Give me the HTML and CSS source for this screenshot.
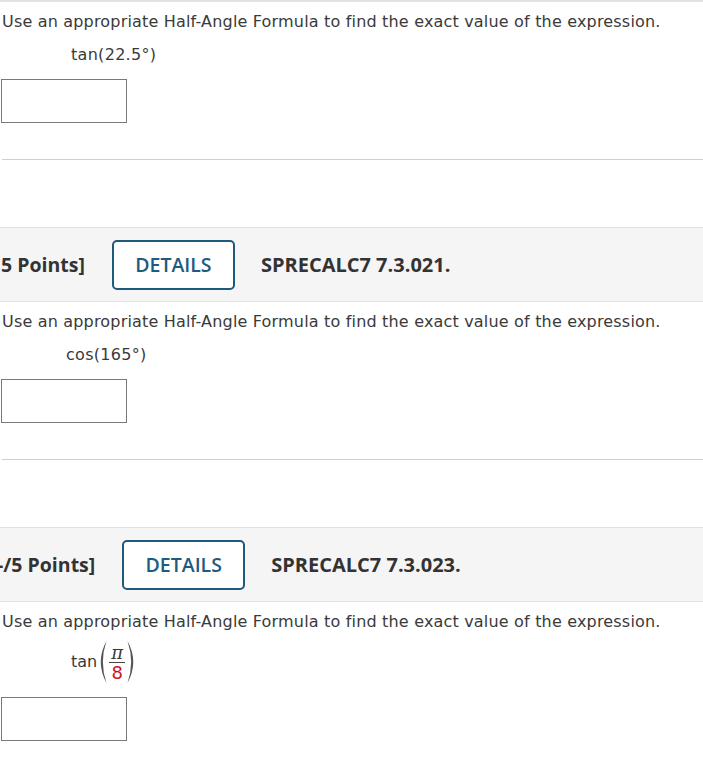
FILE: index.html
```html
<!DOCTYPE html>
<html>
<head>
<meta charset="utf-8">
<link rel="stylesheet" href="styles.css">
</head>
<body>
<div class="page">
  <section class="question first">
    <p class="prompt">Use an appropriate Half-Angle Formula to find the exact value of the expression.</p>
    <div class="expr expr-tan">tan(22.5°)</div>
    <div class="answer"><input class="box" type="text"></div>
  </section>
  <div class="spacer"></div>

  <header class="qhead">
    <span class="points p1">5 Points]</span>
    <button class="details">DETAILS</button>
    <span class="code">SPRECALC7 7.3.021.</span>
  </header>
  <section class="question">
    <p class="prompt">Use an appropriate Half-Angle Formula to find the exact value of the expression.</p>
    <div class="expr expr-cos">cos(165°)</div>
    <div class="answer"><input class="box" type="text"></div>
  </section>
  <div class="spacer"></div>

  <header class="qhead">
    <span class="points p2">-/5 Points]</span>
    <button class="details">DETAILS</button>
    <span class="code">SPRECALC7 7.3.023.</span>
  </header>
  <section class="question last">
    <p class="prompt">Use an appropriate Half-Angle Formula to find the exact value of the expression.</p>
    <div class="expr-frac">
      <span class="fn">tan</span>
      <svg class="paren" width="10" height="44" viewBox="0 0 10 44"><path d="M9.5 1 Q-2 22 9.5 43 Q2.2 22 9.5 1Z" fill="#555"/></svg>
      <span class="frac"><span class="num">π</span><span class="den">8</span></span>
      <svg class="paren" width="10" height="44" viewBox="0 0 10 44"><path d="M0.5 1 Q12 22 0.5 43 Q7.8 22 0.5 1Z" fill="#555"/></svg>
    </div>
    <div class="answer"><input class="box" type="text"></div>
  </section>
</div>
</body>
</html>
```
FILE: styles.css
```css
html, body {
  margin: 0;
  padding: 0;
  background: #fff;
}
.page {
  width: 703px;
  overflow: hidden;
  font-family: "DejaVu Sans", Verdana, sans-serif;
  color: #3a3a3a;
}
.question {
  padding: 0 0 0 2px;
}
.question.first {
  border-top: 2px solid #e2e2e2;
}
.prompt {
  margin: 0;
  padding-top: 10px;
  font-size: 16px;
  line-height: 20px;
  letter-spacing: 0.18px;
  white-space: nowrap;
}
.expr {
  font-size: 16px;
  line-height: 20px;
  margin-top: 13px;
  letter-spacing: 0.3px;
}
.expr-tan { margin-left: 69px; }
.expr-cos { margin-left: 64px; }
.answer {
  padding-top: 14px;
  padding-bottom: 36px;
  border-bottom: 1px solid #cfcfcf;
}
.question.last .answer {
  padding-top: 13px;
  border-bottom: none;
}
.box {
  display: block;
  box-sizing: border-box;
  width: 126px;
  height: 44px;
  margin: 0 0 0 -1px;
  border: 1px solid #7a7a7a;
  padding: 0;
  background: #fff;
}
.spacer {
  height: 67px;
}
.qhead {
  display: flex;
  align-items: center;
  height: 73px;
  background: #f5f5f5;
  border-top: 1px solid #e0e0e0;
  border-bottom: 1px solid #e0e0e0;
  font-family: "Open Sans", sans-serif;
  font-weight: 700;
  font-size: 19.5px;
  color: #333;
  white-space: nowrap;
}
.points { margin-right: 27px; }
.points.p1 { margin-left: 1px; }
.points.p2 { margin-left: -3px; }
.details {
  box-sizing: border-box;
  height: 50px;
  width: 123px;
  border: 2px solid #1e5a7c;
  border-radius: 5px;
  background: #fff;
  color: #1d5b80;
  font-family: "Open Sans", sans-serif;
  font-weight: 600;
  font-size: 19.5px;
  padding: 0;
  margin-right: 26px;
  flex: none;
}
.code {
  font-weight: 700;
  font-size: 20px;
}
.expr-frac {
  display: flex;
  align-items: center;
  margin-left: 69px;
  margin-top: 8px;
  height: 44px;
}
.fn {
  font-size: 16px;
  line-height: 20px;
}
.paren {
  display: block;
  flex: none;
}
.frac {
  display: inline-flex;
  flex-direction: column;
  align-items: center;
  margin: 0 2px;
  font-size: 18px;
  line-height: 17px;
}
.num {
  font-family: "DejaVu Serif", serif;
  font-style: italic;
  border-bottom: 1px solid #444;
  padding: 0 2px 1px;
}
.den {
  color: #d0141a;
  padding-top: 1px;
}
```
